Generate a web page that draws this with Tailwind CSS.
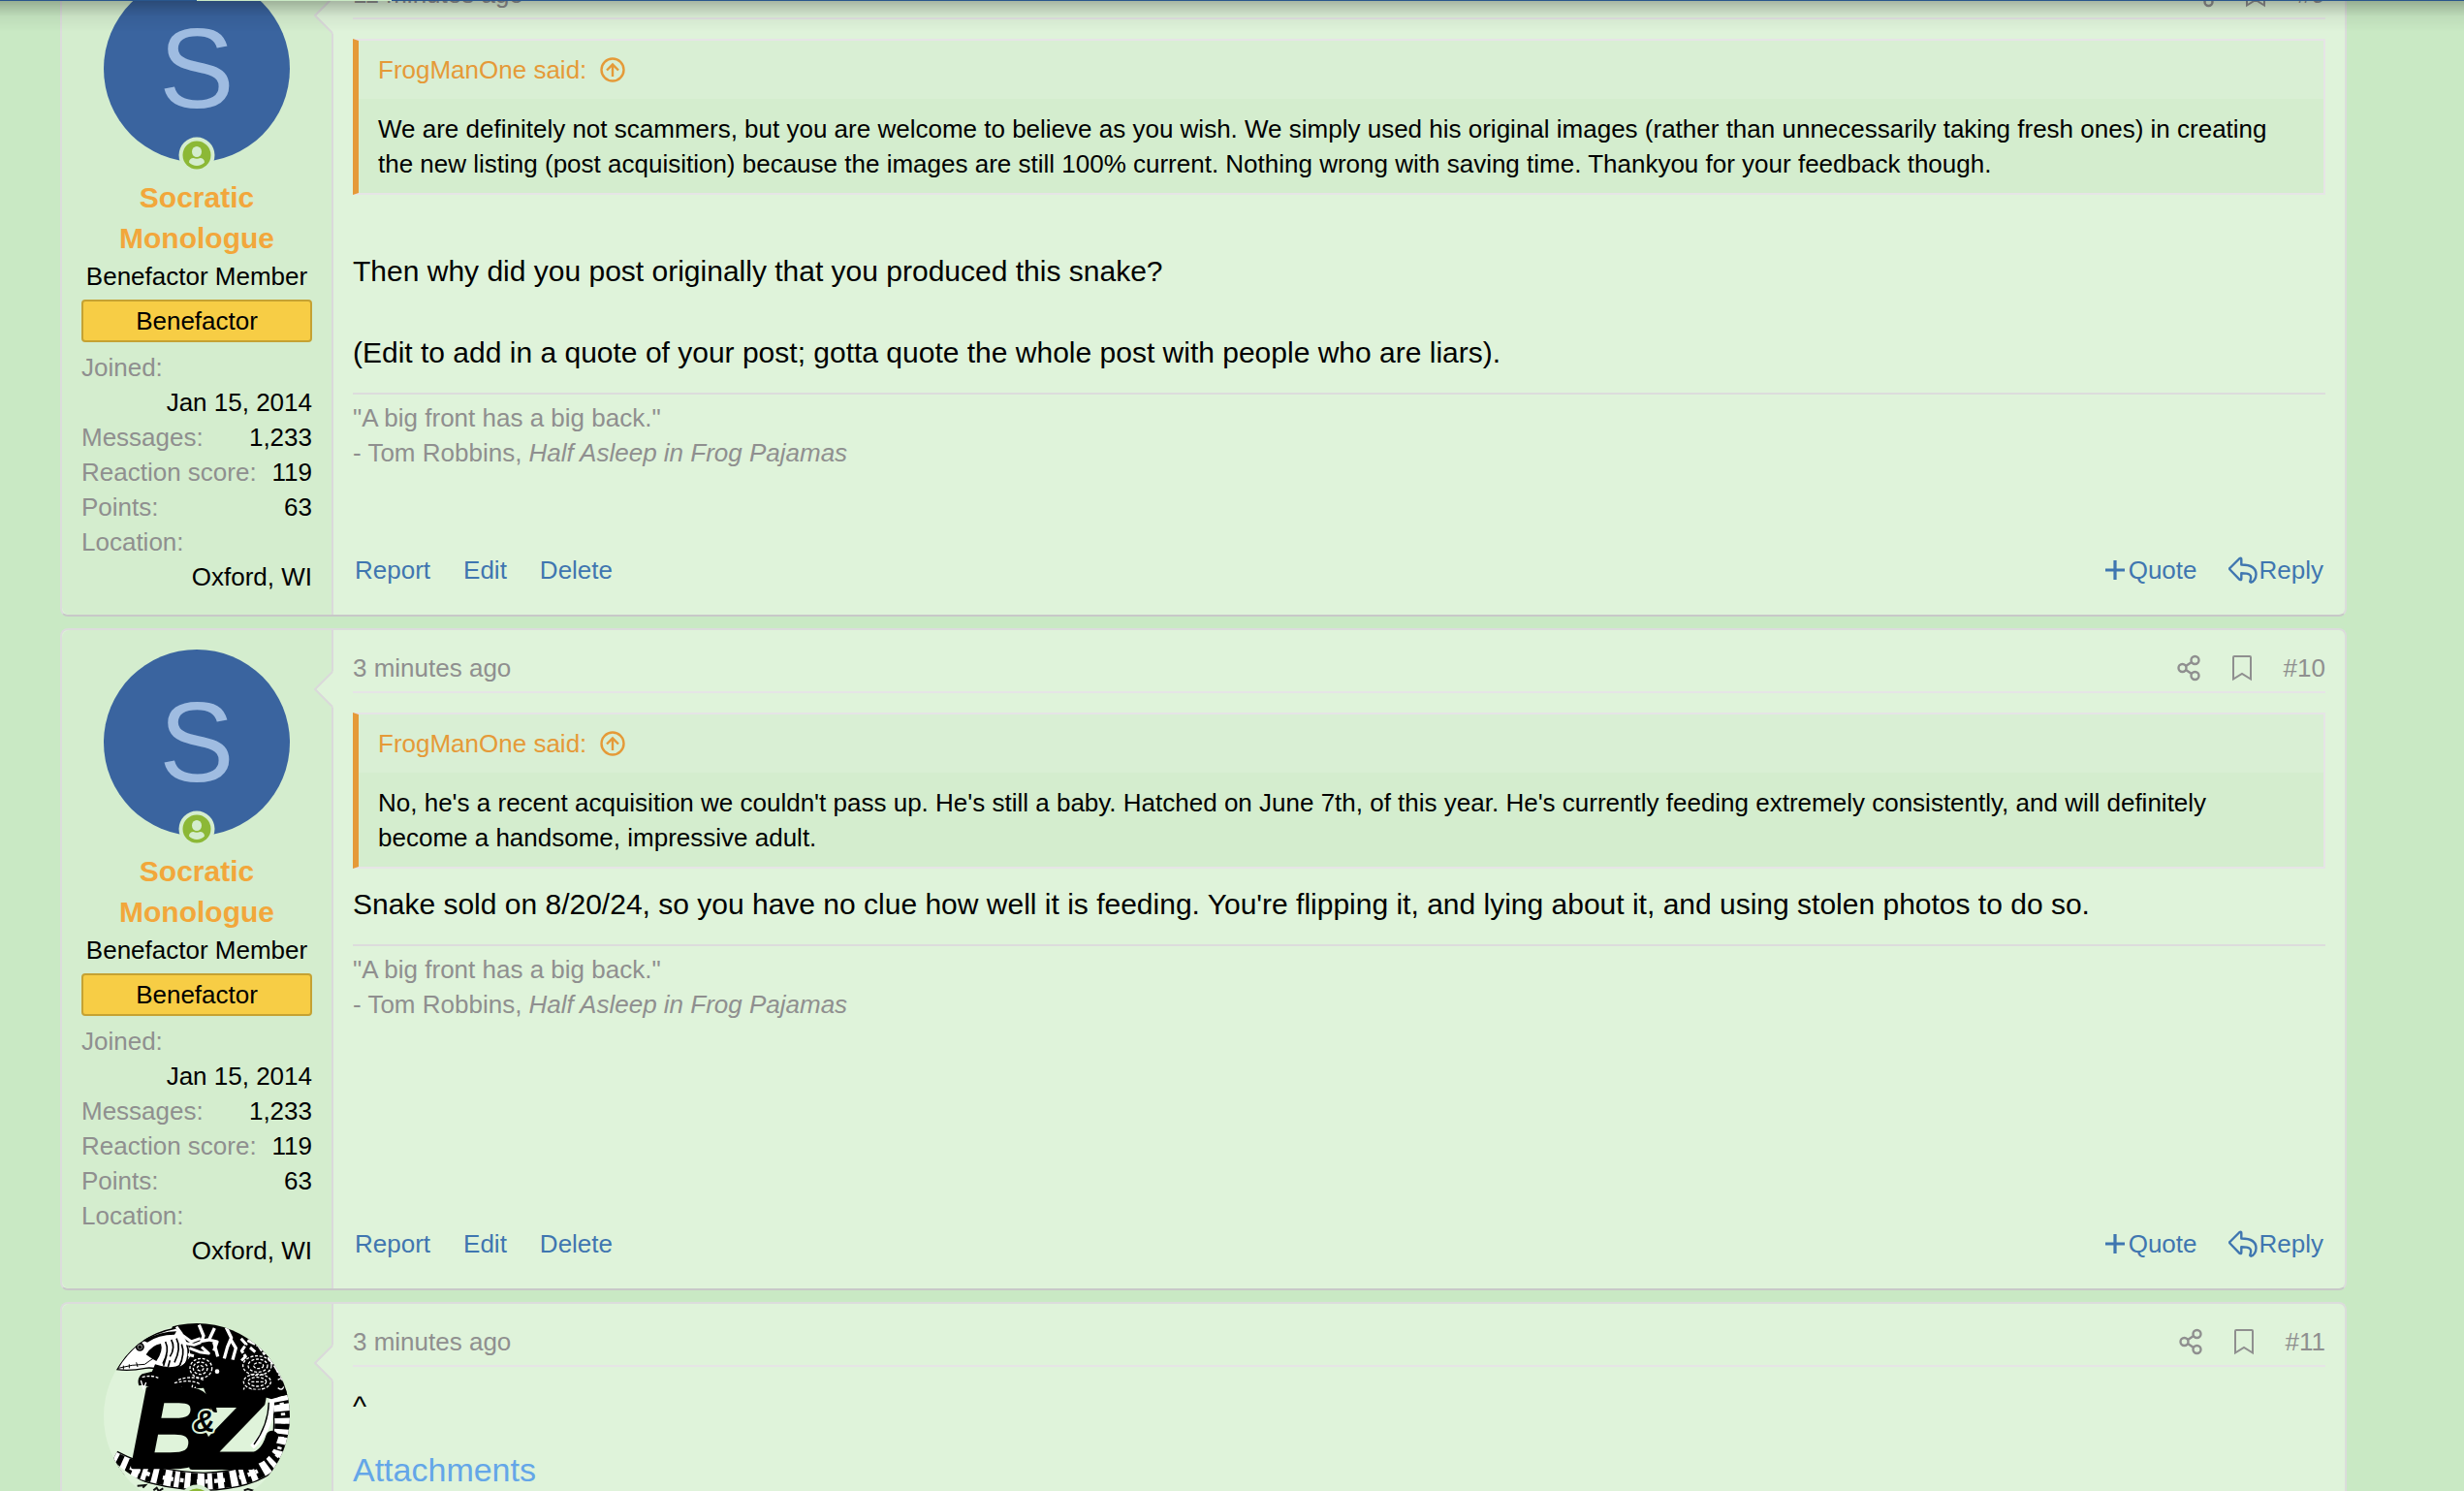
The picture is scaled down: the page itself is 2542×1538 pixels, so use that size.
<!DOCTYPE html>
<html lang="en">

<head>
    <meta charset="UTF-8">
    <meta name="viewport" content="width=device-width, initial-scale=1.0">
    <title>Forum thread</title>
    <script src="https://cdn.jsdelivr.net/npm/@tailwindcss/browser@4"></script>
</head>

<body class="bg-[#c9e9c4] font-['Liberation_Sans',Arial,sans-serif] text-[26px] leading-[36px] text-black h-screen overflow-hidden">

    <!-- Shared icons -->
    <svg class="hidden">
        <symbol id="share" viewBox="0 0 24 28">
            <g fill="none" stroke="currentColor" stroke-width="2.400">
                <circle cx="5.500" cy="14" r="4" />
                <circle cx="18.500" cy="6" r="4" />
                <circle cx="18.500" cy="22" r="4" />
                <path d="M9 12l6-4M9 16l6 4" />
            </g>
        </symbol>
        <symbol id="bookmark" viewBox="0 0 20 28">
            <path d="M1 25.500V3q0-1 1-1h16q1 0 1 1v22.500l-9-5.500z" fill="none" stroke="currentColor" stroke-width="2" />
        </symbol>
        <symbol id="jump" viewBox="0 0 26 26">
            <g fill="none" stroke="currentColor" stroke-width="2.400">
                <circle cx="13" cy="13" r="11.500" />
                <path d="M13 20V7.500M7 13.500l6-6 6 6" />
            </g>
        </symbol>
        <symbol id="plus" viewBox="0 0 20 20">
            <path d="M10 0v20M0 10h20" fill="none" stroke="currentColor" stroke-width="3.200" />
        </symbol>
        <symbol id="reply" viewBox="0 0 30 28">
            <path d="M11.500 2q1.800-1 1.800 1v5.500C22 8.500 28.500 11 28.500 18.500c0 4-2.500 7.500-5 8.200q-1.800 0-1-2C24.500 19 22 17.300 13.300 17.300V23q0 1.800-1.800.8L1.500 13.500q-.8-.8 0-1.500z" fill="none" stroke="currentColor" stroke-width="2.400" stroke-linejoin="round" />
        </symbol>
        <symbol id="online" viewBox="0 0 38 38">
            <circle cx="19" cy="19" r="18.500" fill="#d4edce" />
            <circle cx="19" cy="19" r="14.500" fill="#8cb836" />
            <ellipse cx="19" cy="15.500" rx="5" ry="5.500" fill="#d4edce" />
            <path d="M11 26.500c0-3 2-4.500 4.500-4.500 2 1 5 1 7 0 2.500 0 4.500 1.500 4.500 4.500-4 4.500-12 4.500-16 0z" fill="#d4edce" />
        </symbol>
        <symbol id="arrow" viewBox="0 0 20 38">
            <path d="M20 0v38L2 19z" fill="#dff3da" />
            <path d="M19 1L1 19l18 18" fill="none" stroke="#dad9da" stroke-width="2" />
        </symbol>
    </svg>

    <!-- Bottom edge of the sticky nav -->
    <div class="fixed top-0 inset-x-0 z-10 h-9 pointer-events-none">
        <div class="flex h-px bg-[#29568c]">
            <div class="ml-[203px] w-[201px] bg-[#c9e9c4]"></div>
        </div>
        <div class="h-8 bg-linear-to-b from-black/25 via-black/5 via-50% to-transparent"></div>
    </div>

    <main class="-mt-[47px] ml-[62px] mr-[121px] flex flex-col gap-3">
        <!-- Post 9 -->
        <article class="flex rounded-lg border-2 border-[#dcdcdc] border-b-[#c8c8c8] bg-[#dff3da]">
            <aside class="w-[280px] shrink-0 rounded-l-lg border-r-2 border-[#dad9da] bg-[#d4edce] px-5 pt-5 pb-[21px]">
                <div class="relative mx-auto flex size-48 items-center justify-center rounded-full bg-[#3a649f] text-[116px] text-[#9fbce1]">
                    S
                    <svg class="absolute -bottom-3 left-1/2 size-[38px] -translate-x-1/2"><use href="#online" /></svg>
                </div>
                <h4 class="mt-4 text-center text-[30px] leading-[42px] font-bold"><a href="#" class="text-[#f2a73b]">Socratic Monologue</a></h4>
                <h5 class="-mx-2 text-center">Benefactor Member</h5>
                <div class="mt-1.5 flex h-11 items-center justify-center rounded border-2 border-[#c5a233] bg-[#f7cd45]">Benefactor</div>
                <dl class="mt-2">
                    <div><dt class="text-[#8f8f8f]">Joined:</dt><dd class="text-right">Jan 15, 2014</dd></div>
                    <div class="flex justify-between"><dt class="text-[#8f8f8f]">Messages:</dt><dd>1,233</dd></div>
                    <div class="flex justify-between"><dt class="text-[#8f8f8f]">Reaction score:</dt><dd>119</dd></div>
                    <div class="flex justify-between"><dt class="text-[#8f8f8f]">Points:</dt><dd>63</dd></div>
                    <div><dt class="text-[#8f8f8f]">Location:</dt><dd class="text-right">Oxford, WI</dd></div>
                </dl>
            </aside>
            <div class="relative flex min-w-0 grow flex-col px-5 pt-[21px] pb-7">
                <svg class="absolute top-[42px] -left-5 h-[38px] w-5"><use href="#arrow" /></svg>
                <header class="flex items-center justify-between border-b-2 border-[#e2e2e2] pb-1.5 text-[#8f8f8f]">
                    <a href="#">11 minutes ago</a>
                    <div class="flex items-center gap-[33px]">
                        <a href="#" aria-label="Share"><svg class="h-7 w-6"><use href="#share" /></svg></a>
                        <a href="#" aria-label="Bookmark"><svg class="h-7 w-5"><use href="#bookmark" /></svg></a>
                        <a href="#">#9</a>
                    </div>
                </header>
                <blockquote class="mt-5 border-2 border-l-6 border-[#e6e4e6] border-l-[#e59a38] bg-[#d4edce]">
                    <a href="#" class="flex items-center gap-3.5 bg-[#d9efd4] px-5 py-3 text-[#e59a38]">FrogManOne said: <svg class="size-[26px]"><use href="#jump" /></svg></a>
                    <p class="px-5 pt-[13px] pb-3">We are definitely not scammers, but you are welcome to believe as you wish. We simply used his original images (rather than unnecessarily taking fresh ones) in creating the new listing (post acquisition) because the images are still 100% current. Nothing wrong with saving time. Thankyou for your feedback though.</p>
                </blockquote>
                <div class="mt-4 text-[30px] leading-[42px]">
                    <br>
                    Then why did you post originally that you produced this snake?<br>
                    <br>
                    (Edit to add in a quote of your post; gotta quote the whole post with people who are liars).
                </div>
                <div class="mt-5 border-t-2 border-[#dcdcdc] pt-1.5 text-[#8f8f8f]">"A big front has a big back."<br>- Tom Robbins, <i>Half Asleep in Frog Pajamas</i></div>
                <footer class="mt-auto flex justify-between px-0.5 text-[#3f76b0]">
                    <div class="flex gap-[34px]"><a href="#">Report</a><a href="#">Edit</a><a href="#">Delete</a></div>
                    <div class="flex gap-8">
                        <a href="#" class="flex items-center gap-1"><svg class="size-5"><use href="#plus" /></svg>Quote</a>
                        <a href="#" class="flex items-center gap-0.5"><svg class="h-7 w-[30px]"><use href="#reply" /></svg>Reply</a>
                    </div>
                </footer>
            </div>
        </article>

        <!-- Post 10 -->
        <article class="flex rounded-lg border-2 border-[#dcdcdc] border-b-[#c8c8c8] bg-[#dff3da]">
            <aside class="w-[280px] shrink-0 rounded-l-lg border-r-2 border-[#dad9da] bg-[#d4edce] px-5 pt-5 pb-[21px]">
                <div class="relative mx-auto flex size-48 items-center justify-center rounded-full bg-[#3a649f] text-[116px] text-[#9fbce1]">
                    S
                    <svg class="absolute -bottom-3 left-1/2 size-[38px] -translate-x-1/2"><use href="#online" /></svg>
                </div>
                <h4 class="mt-4 text-center text-[30px] leading-[42px] font-bold"><a href="#" class="text-[#f2a73b]">Socratic Monologue</a></h4>
                <h5 class="-mx-2 text-center">Benefactor Member</h5>
                <div class="mt-1.5 flex h-11 items-center justify-center rounded border-2 border-[#c5a233] bg-[#f7cd45]">Benefactor</div>
                <dl class="mt-2">
                    <div><dt class="text-[#8f8f8f]">Joined:</dt><dd class="text-right">Jan 15, 2014</dd></div>
                    <div class="flex justify-between"><dt class="text-[#8f8f8f]">Messages:</dt><dd>1,233</dd></div>
                    <div class="flex justify-between"><dt class="text-[#8f8f8f]">Reaction score:</dt><dd>119</dd></div>
                    <div class="flex justify-between"><dt class="text-[#8f8f8f]">Points:</dt><dd>63</dd></div>
                    <div><dt class="text-[#8f8f8f]">Location:</dt><dd class="text-right">Oxford, WI</dd></div>
                </dl>
            </aside>
            <div class="relative flex min-w-0 grow flex-col px-5 pt-[21px] pb-7">
                <svg class="absolute top-[42px] -left-5 h-[38px] w-5"><use href="#arrow" /></svg>
                <header class="flex items-center justify-between border-b-2 border-[#e6e4e6] pb-1.5 text-[#8f8f8f]">
                    <a href="#">3 minutes ago</a>
                    <div class="flex items-center gap-[33px]">
                        <a href="#" aria-label="Share"><svg class="h-7 w-6"><use href="#share" /></svg></a>
                        <a href="#" aria-label="Bookmark"><svg class="h-7 w-5"><use href="#bookmark" /></svg></a>
                        <a href="#">#10</a>
                    </div>
                </header>
                <blockquote class="mt-5 border-2 border-l-6 border-[#e6e4e6] border-l-[#e59a38] bg-[#d4edce]">
                    <a href="#" class="flex items-center gap-3.5 bg-[#d9efd4] px-5 py-3 text-[#e59a38]">FrogManOne said: <svg class="size-[26px]"><use href="#jump" /></svg></a>
                    <p class="px-5 pt-[13px] pb-3">No, he's a recent acquisition we couldn't pass up. He's still a baby. Hatched on June 7th, of this year. He's currently feeding extremely consistently, and will definitely<br>become a handsome, impressive adult.</p>
                </blockquote>
                <div class="mt-4 text-[30px] leading-[42px]">Snake sold on 8/20/24, so you have no clue how well it is feeding. You're flipping it, and lying about it, and using stolen photos to do so.</div>
                <div class="mt-5 border-t-2 border-[#dcdcdc] pt-1.5 text-[#8f8f8f]">"A big front has a big back."<br>- Tom Robbins, <i>Half Asleep in Frog Pajamas</i></div>
                <footer class="mt-auto flex justify-between px-0.5 text-[#3f76b0]">
                    <div class="flex gap-[34px]"><a href="#">Report</a><a href="#">Edit</a><a href="#">Delete</a></div>
                    <div class="flex gap-8">
                        <a href="#" class="flex items-center gap-1"><svg class="size-5"><use href="#plus" /></svg>Quote</a>
                        <a href="#" class="flex items-center gap-0.5"><svg class="h-7 w-[30px]"><use href="#reply" /></svg>Reply</a>
                    </div>
                </footer>
            </div>
        </article>

        <!-- Post 11 -->
        <article class="flex rounded-t-lg border-2 border-b-0 border-[#dcdcdc] bg-[#dff3da]">
            <aside class="w-[280px] shrink-0 rounded-tl-lg border-r-2 border-[#dad9da] bg-[#d4edce] px-5 py-5">
                <div class="relative mx-auto size-48">
                    <svg class="size-48 rounded-full bg-[#dff3da]" viewBox="21 15 576 576" role="img" aria-label="B&amp;Z logo">
                        <!-- tail -->
                        <g fill="none">
                            <path d="M562 225Q590 330 558 425Q500 500 330 505Q170 500 50 436" stroke="#000" stroke-width="58" />
                            <path d="M562 225Q590 330 558 425Q500 500 330 505Q170 500 50 436" stroke="#fff" stroke-width="50" />
                            <path d="M562 225Q590 330 558 425Q500 500 330 505Q170 500 50 436" stroke="#000" stroke-width="50" stroke-dasharray="17 15 9 22 21 18" />
                            <path d="M567 240Q590 330 558 425Q500 500 330 505Q170 500 80 450" stroke="#fff" stroke-width="13" stroke-dasharray="8 13 12 20" />
                            <path d="M40 446Q100 500 150 520Q250 550 330 542" stroke="#dff3da" stroke-width="22" />
                            <path d="M540 240Q550 330 480 398" stroke="#fff" stroke-width="16" />
                            <path d="M532 260Q530 330 486 390" stroke="#000" stroke-width="4" />
                        </g>
                        <path d="M125 518l25-2-8 8M175 532l10-8 6 10 14-8M455 532l12-4 20 6" fill="none" stroke="#111" stroke-width="6" />
                        <!-- body -->
                        <path d="M235 20Q300 5 400 15Q520 40 575 165L590 235L540 250Q500 235 440 235L385 238Q362 255 372 290Q355 295 352 270L330 215L180 225Q150 200 130 208Q122 185 140 172L190 160Z" fill="#000" />
                        <!-- head -->
                        <path d="M62 158Q90 110 130 78Q180 42 245 30Q285 60 292 115Q270 160 210 162Q170 150 150 154Q100 164 62 158Z" fill="#fff" stroke="#000" stroke-width="4" />
                        <path d="M152 112Q170 82 198 78Q206 100 184 132Q165 122 152 112ZM142 68Q200 40 246 40L240 50Q190 50 156 74ZM180 142Q230 160 262 140L240 166H170Z" fill="#000" />
                        <g fill="none" stroke="#000" stroke-width="5">
                            <path d="M66 154Q110 142 148 142Q164 130 174 124M82 146v12M100 142v12M122 136l4 14" stroke-width="3" />
                            <path d="M212 72Q226 100 204 140M230 66Q244 90 226 118M246 62Q262 92 240 136M262 80Q274 110 254 150M216 112l-10 34M226 130l-6 20M278 80Q290 110 272 146" />
                            <circle cx="133" cy="88" r="11" fill="#777" />
                        </g>
                        <circle cx="133" cy="89" r="5" />
                        <!-- hide pattern -->
                        <g fill="none" stroke="#fff" stroke-linejoin="round">
                            <path d="M246 26L262 48L252 60M262 50L292 72L320 62M268 76L300 82L322 74M286 92L318 104L346 108L324 88M282 112L300 116" stroke-width="9" />
                            <path d="M316 20L330 54L324 70L346 66L372 72L362 100M346 68L364 30M362 74L374 118M400 28L416 60L404 88L394 124M412 62L430 92L420 128M444 30L450 48" stroke-width="10" />
                            <path d="M446 62L462 80L448 100L460 118L446 132M466 68L500 84L520 112M474 90L490 104M504 60L524 100M530 120Q556 150 566 176" stroke-width="9" stroke-dasharray="26 5" />
                            <path d="M556 140L580 190" stroke-width="16" />
                        </g>
                        <!-- scaly legs -->
                        <g fill="none" stroke="#fff" stroke-width="4">
                            <g stroke-dasharray="9 5">
                                <ellipse cx="322" cy="154" rx="34" ry="30" />
                                <ellipse cx="320" cy="154" rx="22" ry="19" />
                                <ellipse cx="320" cy="154" rx="10" ry="8" />
                                <ellipse cx="496" cy="146" rx="44" ry="30" />
                                <ellipse cx="498" cy="146" rx="30" ry="20" />
                                <ellipse cx="500" cy="146" rx="15" ry="9" />
                                <ellipse cx="496" cy="196" rx="42" ry="24" />
                                <ellipse cx="496" cy="196" rx="28" ry="14" />
                                <path d="M478 196h38M252 190Q290 176 330 190M240 200Q290 186 320 204M140 182Q170 174 190 184" />
                            </g>
                            <path d="M456 214l-6 24M480 220l-4 18M512 216l2 20M262 212l4 24 8-18M296 206l-4 20 14-14M136 192l8 26 8-20" />
                            <circle cx="372" cy="164" r="5" fill="#fff" />
                            <path d="M560 190q14-10 18 6M560 215q14 10 18-4" />
                        </g>
                        <!-- lettering -->
                        <g font-family="Liberation Sans, Arial, sans-serif" font-weight="bold" font-style="italic" stroke="#000" stroke-linejoin="round">
                            <text x="106" y="459" font-size="352" stroke-width="14">B</text>
                            <text x="302" y="459" font-size="336" stroke-width="18">Z</text>
                            <text x="298" y="350" font-size="94" stroke="#dff3da" stroke-width="12" paint-order="stroke">&amp;</text>
                        </g>
                        <path d="M460 436Q520 440 542 366" fill="none" stroke="#000" stroke-width="38" stroke-linecap="round" />
                    </svg>
                    <svg class="absolute -bottom-3 left-1/2 size-[38px] -translate-x-1/2"><use href="#online" /></svg>
                </div>
            </aside>
            <div class="relative flex min-w-0 grow flex-col px-5 pt-[21px] pb-7">
                <svg class="absolute top-[42px] -left-5 h-[38px] w-5"><use href="#arrow" /></svg>
                <header class="flex items-center justify-between border-b-2 border-[#e6e4e6] pb-1.5 text-[#8f8f8f]">
                    <a href="#">3 minutes ago</a>
                    <div class="flex items-center gap-[33px]">
                        <a href="#" aria-label="Share"><svg class="h-7 w-6"><use href="#share" /></svg></a>
                        <a href="#" aria-label="Bookmark"><svg class="h-7 w-5"><use href="#bookmark" /></svg></a>
                        <a href="#">#11</a>
                    </div>
                </header>
                <div class="mt-5 text-[30px] leading-[42px]">^</div>
                <h4 class="mt-5 text-[34px] leading-[48px] text-[#64a6e8]">Attachments</h4>
            </div>
        </article>
    </main>
</body>

</html>
